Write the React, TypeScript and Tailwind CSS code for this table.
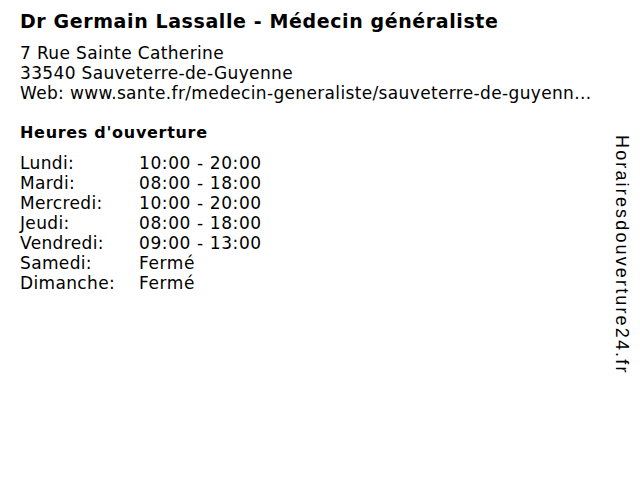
import React from "react";

const hours: [string, string][] = [
  ["Lundi:", "10:00 - 20:00"],
  ["Mardi:", "08:00 - 18:00"],
  ["Mercredi:", "10:00 - 20:00"],
  ["Jeudi:", "08:00 - 18:00"],
  ["Vendredi:", "09:00 - 13:00"],
  ["Samedi:", "Fermé"],
  ["Dimanche:", "Fermé"],
];

export default function App() {
  return (
    <div className="w-[640px] h-[480px] bg-white text-black flex overflow-hidden">
      <div className="flex-1 pl-5 pt-[9px] font-['DejaVu_Sans',sans-serif]">
        <h1 className="text-[19px] font-bold leading-[24px] tracking-[0.6px] whitespace-nowrap">Dr Germain Lassalle - Médecin généraliste</h1>
        <div className="mt-[10px] text-[17px] leading-[20px] tracking-[0.35px] whitespace-nowrap">
          <div>7 Rue Sainte Catherine</div>
          <div>33540 Sauveterre-de-Guyenne</div>
          <div>Web: www.sante.fr/medecin-generaliste/sauveterre-de-guyenn...</div>
        </div>
        <h2 className="mt-[20px] text-[16px] font-bold leading-[20px] tracking-[0.7px]">Heures d'ouverture</h2>
        <div className="mt-[10px] text-[17px] leading-[20px] tracking-[0.35px]">
          {hours.map(([d, h]) => (
            <div key={d} className="flex">
              <span className="w-[119px]">{d}</span>
              <span className="tracking-[0.6px]">{h}</span>
            </div>
          ))}
        </div>
      </div>
      <div className="w-[28px] pt-[135px] flex justify-start">
        <span className="[writing-mode:vertical-rl] font-['Liberation_Sans',sans-serif] text-[18px] leading-[20px] tracking-[2.15px]">
          Horairesdouverture24.fr
        </span>
      </div>
    </div>
  );
}
